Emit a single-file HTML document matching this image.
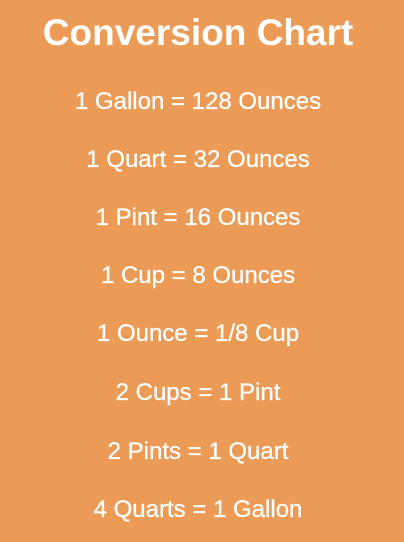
<!DOCTYPE html>
<html><head><meta charset="utf-8"><style>
html,body{margin:0;padding:0;width:404px;height:542px;background:#EB9B55;overflow:hidden}
body{font-family:"Liberation Sans",Arial,sans-serif;color:#fff;text-align:center;position:relative}
h1{position:absolute;top:11px;left:0;width:396px;margin:0;font-size:37px;font-weight:bold;line-height:44px}
.l{position:absolute;left:0;width:396px;font-size:24px;line-height:26px;-webkit-text-stroke:0.3px #fff}
</style></head><body>
<h1>Conversion Chart</h1>
<div class="l" style="top:89px">1 Gallon = 128 Ounces</div>
<div class="l" style="top:147px">1 Quart = 32 Ounces</div>
<div class="l" style="top:205px">1 Pint = 16 Ounces</div>
<div class="l" style="top:263px">1 Cup = 8 Ounces</div>
<div class="l" style="top:321px">1 Ounce = 1/8 Cup</div>
<div class="l" style="top:380px">2 Cups = 1 Pint</div>
<div class="l" style="top:439px">2 Pints = 1 Quart</div>
<div class="l" style="top:497px">4 Quarts = 1 Gallon</div>
</body></html>
